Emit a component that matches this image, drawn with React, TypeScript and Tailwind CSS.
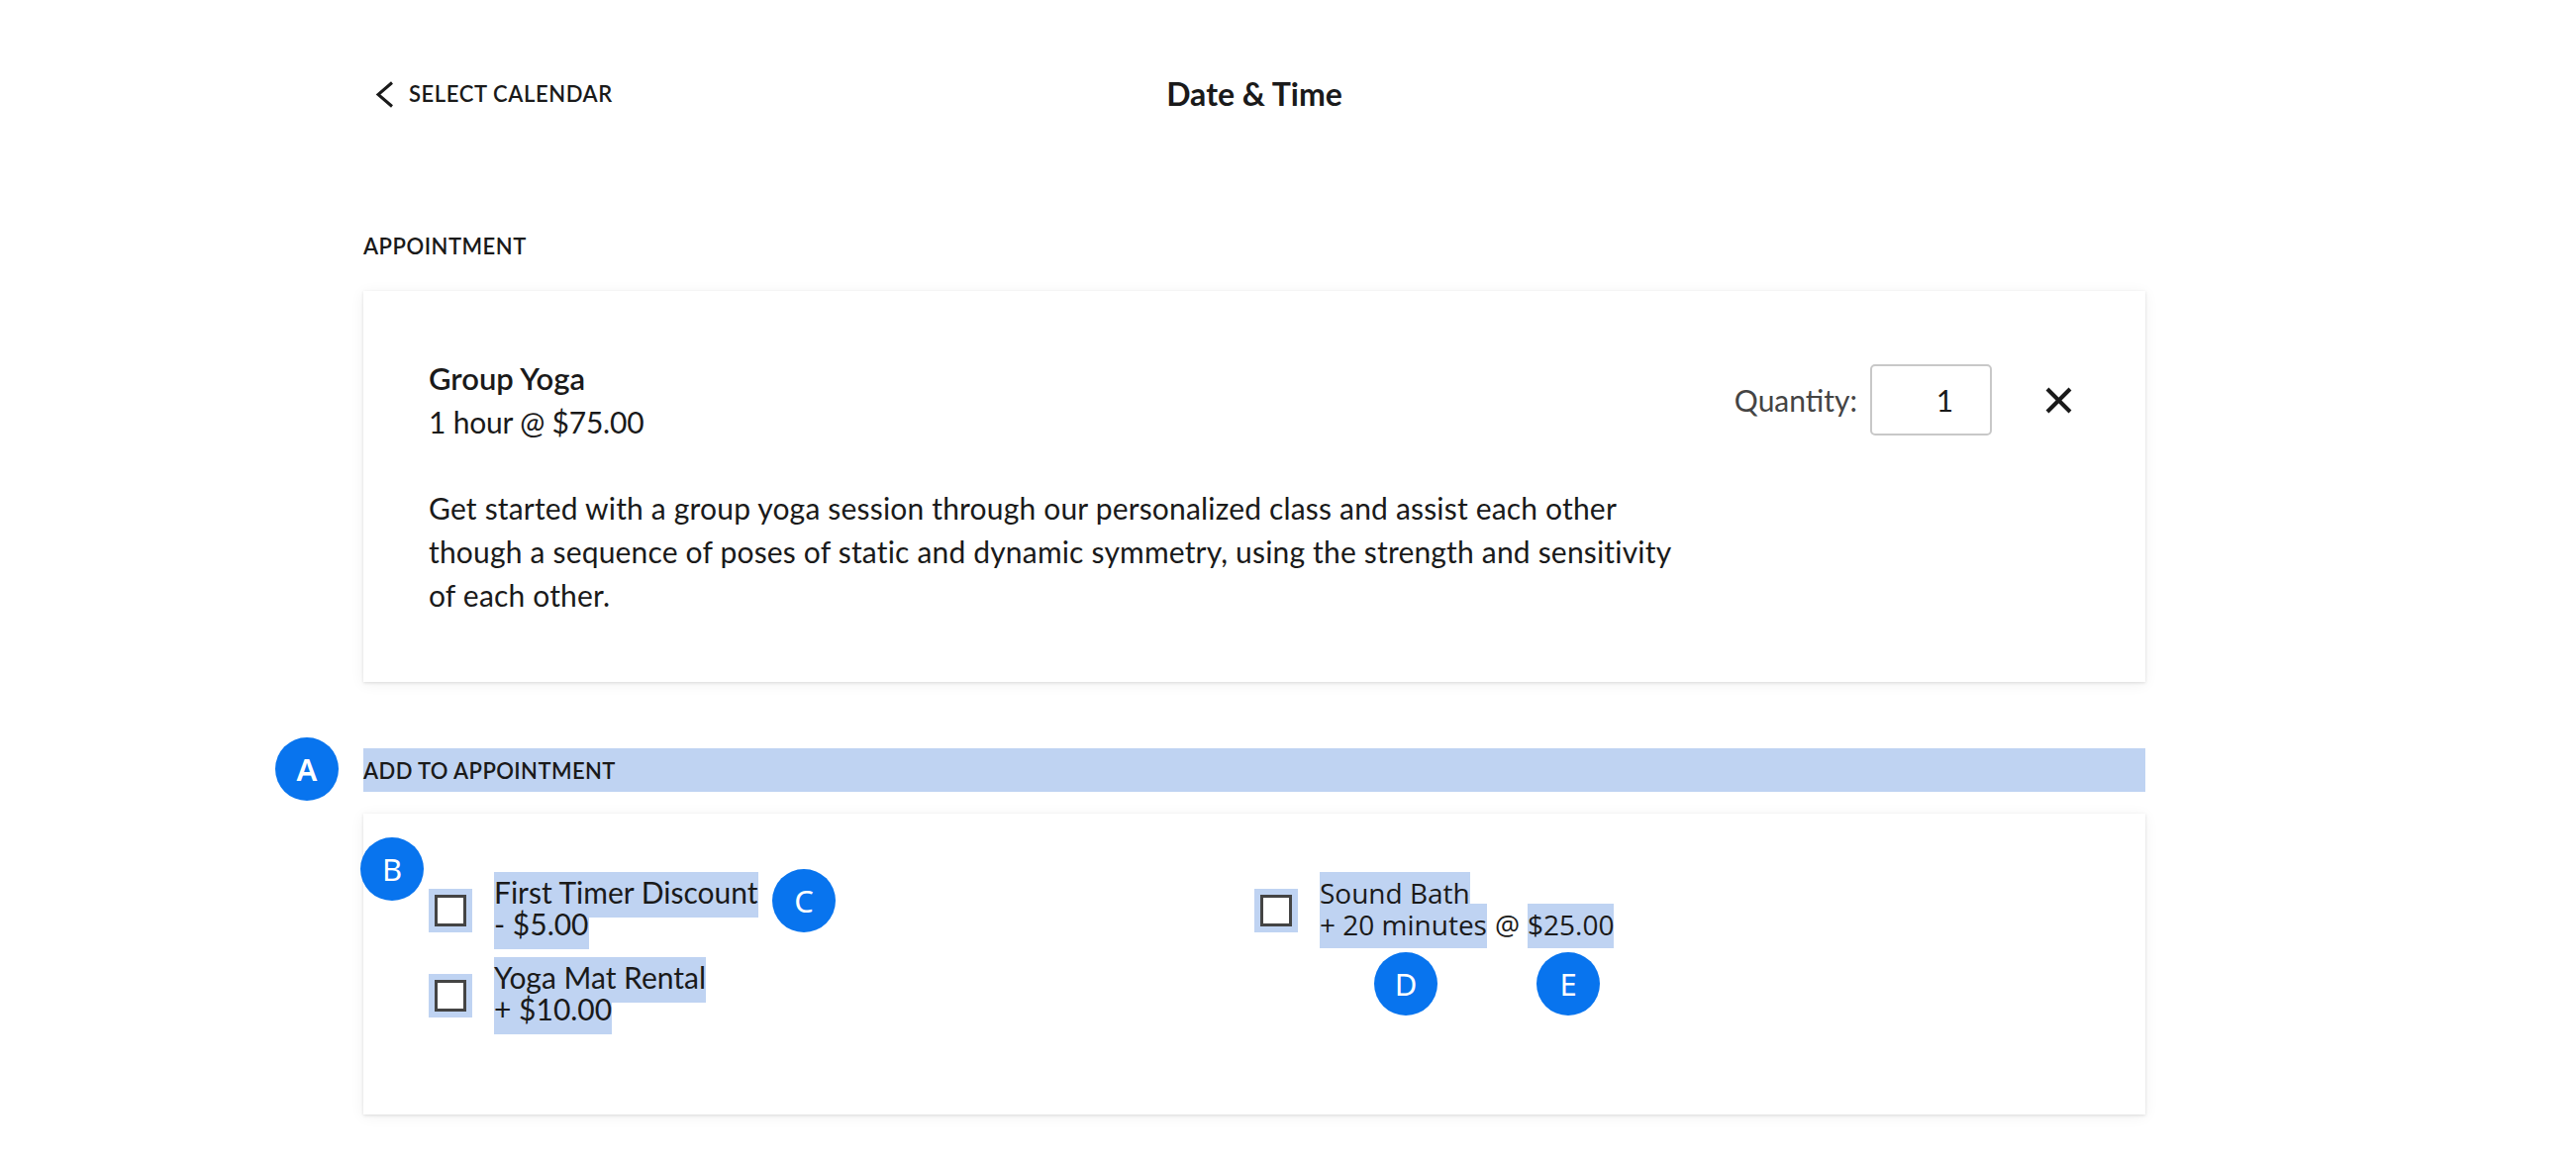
import React from 'react';

function Badge({ letter, className }: { letter: string; className: string }) {
  return (
    <div
      className={`absolute w-[64px] h-[64px] rounded-full bg-[#0874ee] text-white flex items-center justify-center text-[31px] leading-none font-['Noto_Sans',sans-serif] ${className}`}
    >
      {letter}
    </div>
  );
}

function Checkbox() {
  return (
    <span className="w-[44px] h-[44px] shrink-0 bg-[#bfd3f2] flex items-center justify-center">
      <span className="w-[32px] h-[32px] bg-white border-[3px] border-[#444]" />
    </span>
  );
}

export default function App() {
  return (
    <div className="min-h-screen bg-white text-[#1a1a1a] font-['Lato',sans-serif]">
      <div className="ml-[367px] w-[1800px] pt-[65px]">
        {/* header */}
        <div className="grid grid-cols-[1fr_auto_1fr] items-center h-[60px]">
          <button className="flex items-center pl-[12px] gap-[14px] justify-self-start">
            <svg width="20" height="27" viewBox="0 0 20 27" fill="none">
              <polyline points="17,1.5 3,13.5 17,25.5" stroke="#1a1a1a" strokeWidth="3" />
            </svg>
            <span className="text-[22px] font-semibold tracking-[0.6px] leading-none">SELECT CALENDAR</span>
          </button>
          <h1 className="text-[32px] font-bold leading-none">Date &amp; Time</h1>
          <div />
        </div>

        <div className="mt-[109px] text-[22px] font-semibold tracking-[0.5px] leading-[30px]">APPOINTMENT</div>

        {/* appointment card */}
        <div className="mt-[30px] bg-white p-[66px] flex justify-between items-start shadow-[0_1px_3px_rgba(0,0,0,0.12),0_2px_14px_rgba(0,0,0,0.06)]">
          <div>
            <div className="text-[31px] font-semibold leading-[44px]">Group Yoga</div>
            <div className="text-[30px] leading-[44px] tracking-[-0.2px]">1 hour @ $75.00</div>
            <p className="mt-[43px] text-[30px] leading-[44px] tracking-[0.18px]">
              Get started with a group yoga session through our personalized class and assist each other
              <br />
              though a sequence of poses of static and dynamic symmetry, using the strength and sensitivity
              <br />
              of each other.
            </p>
          </div>
          <div className="flex items-center mt-[8px]">
            <span className="text-[30px] text-[#444]">Quantity:</span>
            <div className="ml-[13px] w-[123px] h-[72px] border-2 border-[#c8c8c8] rounded-[5px] flex items-center justify-center pl-[28px] text-[30px]">
              1
            </div>
            <button className="ml-[46px] w-[43px] h-[43px] flex items-center justify-center">
              <svg width="27" height="27" viewBox="0 0 27 27">
                <line x1="2" y1="2" x2="25" y2="25" stroke="#1a1a1a" strokeWidth="4" />
                <line x1="25" y1="2" x2="2" y2="25" stroke="#1a1a1a" strokeWidth="4" />
              </svg>
            </button>
          </div>
        </div>

        {/* add to appointment */}
        <div className="relative mt-[67px] h-[44px] bg-[#bfd3f2] flex items-center text-[22px] font-semibold tracking-[0.4px]">
          ADD TO APPOINTMENT
          <Badge letter="A" className="left-[-89px] top-[-11px]" />
        </div>

        <div className="relative mt-[22px] bg-white px-[66px] pt-[59px] pb-[81px] grid grid-cols-2 shadow-[0_1px_3px_rgba(0,0,0,0.12),0_2px_14px_rgba(0,0,0,0.06)]">
          <div className="flex flex-col gap-[8px]">
            <label className="flex items-center gap-[22px]">
              <Checkbox />
              <span className="text-[30px]">
                <span className="block w-fit h-[46px] leading-[32px] pt-[4px] bg-[#bfd3f2]">First Timer Discount</span>
                <span className="block w-fit h-[32px] leading-[12px] bg-[#bfd3f2]">- $5.00</span>
              </span>
            </label>
            <label className="flex items-center gap-[22px]">
              <Checkbox />
              <span className="text-[30px]">
                <span className="block w-fit h-[46px] leading-[32px] pt-[4px] bg-[#bfd3f2]">Yoga Mat Rental</span>
                <span className="block w-fit h-[32px] leading-[12px] bg-[#bfd3f2]">+ $10.00</span>
              </span>
            </label>
          </div>
          <div>
            <label className="flex items-center gap-[22px]">
              <Checkbox />
              <span className="text-[28px] font-['Open_Sans',sans-serif]">
                <span className="block w-fit h-[32px] leading-[24px] pt-[9px] bg-[#bfd3f2]">Sound Bath</span>
                <span className="flex h-[45px] leading-[32px]">
                  <span className="bg-[#bfd3f2] pt-[5px]">+ 20 minutes</span>
                  <span className="pt-[5px] px-[8px]">@</span>
                  <span className="bg-[#bfd3f2] pt-[5px]">$25.00</span>
                </span>
              </span>
            </label>
          </div>
          <Badge letter="B" className="left-[-3px] top-[24px]" />
          <Badge letter="C" className="left-[413px] top-[56px]" />
          <Badge letter="D" className="left-[1021px] top-[140px]" />
          <Badge letter="E" className="left-[1185px] top-[140px]" />
        </div>
      </div>
    </div>
  );
}
